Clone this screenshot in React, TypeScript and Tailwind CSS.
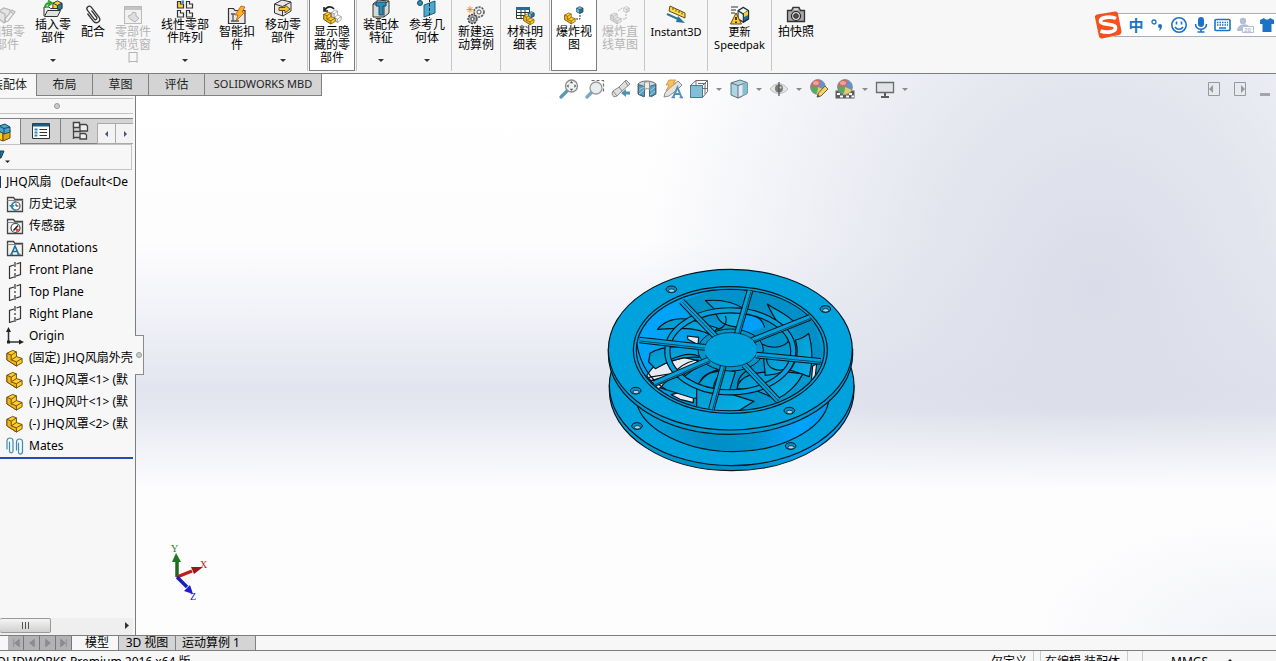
import React from 'react';
import clsx from 'clsx';

type IconProps = { className?: string };
type IconType = (p: IconProps) => React.ReactElement;

function Svg({ size = 20, box = 20, className, children }: { size?: number; box?: number; className?: string; children: React.ReactNode }) {
  return (
    <svg width={size} height={size} viewBox={`0 0 ${box} ${box}`} fill="none" className={clsx('shrink-0', className)} aria-hidden="true">
      {children}
    </svg>
  );
}

/* ---------- shared glyphs ---------- */

function PartShape({ fill = '#ffcf26', side = '#f0b51c', line = '#6b4a10' }) {
  return (
    <g stroke={line} strokeLinejoin="round">
      <path d="M1 4.500 7 1.500l4 1.500v5l6 2v4.500L11 18 1 11.500z" fill={fill} />
      <path d="M1 4.500 5.500 6.500v5L11 13.500V18L1 11.500z" fill={side} />
      <path d="M5.500 6.500 11 3M5.500 11.500 11 8M11 13.500l6-3.500" />
    </g>
  );
}

function CubeShape({ fill = '#6cc3e6', side = '#1f7fa8', line = '#1c2f3a' }) {
  return (
    <g stroke={line} strokeLinejoin="round">
      <path d="M1 3.500 6 1l5 2.500v6L6 12 1 9.500z" fill={fill} />
      <path d="M6 6l5-2.500v6L6 12z" fill={side} />
      <path d="M1 3.500 6 6" />
    </g>
  );
}

/* ---------- ribbon icons ---------- */

const EditPartIcon: IconType = () => (
  <Svg>
    <g stroke="#b5b5b5" strokeWidth="1.200">
      <path d="M2 6l5-3 6 2v8l-6 5-5-4z" fill="#e4e4e4" />
      <path d="M8 14l7-9 3 2-7 9-3 1z" fill="#f1f1f1" />
      <path d="M2 6l6 3v8M14 7l3 2" />
    </g>
  </Svg>
);
const InsertIcon: IconType = () => (
  <Svg>
    <g transform="translate(9 2) scale(.9)"><CubeShape fill="#ffcf26" side="#1f7fa8" /></g>
    <path d="M1 18V9h5l1.500 1.500H15V13" fill="#eee" stroke="#333" />
    <path d="M1.500 18.500 4.500 12.500h13l-3 6z" fill="#e2e2e2" stroke="#333" />
    <path d="M2 10C2 6 4 5 7 5M5 2.500l4 2.500-4 3" stroke="#27a02b" strokeWidth="1.800" />
  </Svg>
);
const ClipIcon: IconType = () => (
  <Svg>
    <g transform="rotate(-38 10 10)" stroke="#333" strokeWidth="1.300" strokeLinecap="round">
      <path d="M6.500 6v9c0 5 7 5 7 0V3c0-3.500-5-3.500-5 0v11c0 2 3 2 3 0V6" />
    </g>
  </Svg>
);
const PreviewIcon: IconType = () => (
  <Svg>
    <rect x="1.500" y="1.500" width="17" height="17" fill="#f1f1f1" stroke="#b9b9b9" />
    <path d="M2 3.500h16" stroke="#c4c4c4" strokeWidth="3" />
    <path d="M5 11l3-1 2-3 3 1v3l3 2-4 4-5-3z" fill="#dedede" stroke="#b5b5b5" />
  </Svg>
);
const PatternIcon: IconType = () => (
  <Svg>
    {[[2, 3], [11, 3], [2, 12], [11, 12]].map(([x, y], i) => (
      <path key={i} transform={`translate(${x} ${y})`} d="M.5.5h3v2.500h3v4h-6z" fill={i === 0 ? '#ffd23a' : '#f4f4f4'} stroke="#333" strokeWidth="1.200" />
    ))}
    <path d="M6.500 2.500h2.500v2.500H6.500z" fill="#2d8db5" />
  </Svg>
);
const FastenerIcon: IconType = () => (
  <Svg>
    <path d="M1.500 18.500v-15h5l1.500 2h10v13z" fill="#e8e8e8" stroke="#333" strokeWidth="1.200" />
    <path d="M4 9h4M6 9v7M4 16h8" stroke="#555" strokeWidth="1.300" />
    <path d="M14 1l4 1-3 5h3l-9 9 2-6H8z" fill="#ffb020" stroke="#b8551a" strokeWidth=".8" />
  </Svg>
);
const MoveIcon: IconType = () => (
  <Svg>
    <path d="M1.500 6 9 2l9 2v9l-8 5-8.500-3z" fill="#e6e6e6" stroke="#333" />
    <path d="M1.500 6l8 2.500V18M9.500 8.500 18 4" stroke="#333" />
    <path d="M6 9.500h6V7l5 4-5 4v-2.500H6z" fill="#f2c53a" stroke="#6b4a10" />
  </Svg>
);
const ShowHideIcon: IconType = () => (
  <Svg>
    <g transform="translate(9 4) scale(.6 .75)"><PartShape fill="#fff" side="#ddd" line="#888" /></g>
    <g transform="translate(1 6) scale(.72)"><PartShape /></g>
    <path d="M3 5c2-4 7-4 9-1M2 2v4h4" stroke="#222" strokeWidth="1.600" />
  </Svg>
);
const AsmFeatureIcon: IconType = () => (
  <Svg>
    <path d="M2 6l5-4 11 1v12l-5 4H2z" fill="#d5d9db" stroke="#333" />
    <path d="M2 6h11v13M13 6l5-3" stroke="#333" />
    <path d="M5 4h10v4h-3v9H8V8H5z" fill="#2d8db5" stroke="#124a63" />
  </Svg>
);
const RefGeomIcon: IconType = () => (
  <Svg>
    <circle cx="3" cy="5" r="2.500" fill="#2d8db5" stroke="#124a63" />
    <path d="M7 7l11-4v12L7 19z" fill="#4aa9d0" stroke="#1b5e7d" />
    <path d="M12.500 1v19" stroke="#222" strokeDasharray="3 1.500" />
  </Svg>
);
const MotionIcon: IconType = () => (
  <Svg>
    <circle cx="13" cy="7" r="5" fill="#e8e8e8" stroke="#555" strokeWidth="1.500" strokeDasharray="2.200 1" />
    <circle cx="13" cy="7" r="2" fill="#fff" stroke="#555" />
    <circle cx="6.500" cy="14" r="4.500" fill="#a9a9a9" stroke="#444" strokeWidth="1.300" strokeDasharray="2.200 1" />
    <circle cx="6.500" cy="14" r="1.600" fill="#fff" stroke="#444" />
    <path d="M4 1v7M.5 4.500h7M1.500 2l5 5M6.500 2l-5 5" stroke="#e8821c" strokeWidth=".8" />
  </Svg>
);
const BomIcon: IconType = () => (
  <Svg>
    <path d="M1.500 2.500h13v11h-13z" fill="#fff" stroke="#333" />
    <path d="M1 3.500h14" stroke="#1f6f94" strokeWidth="3" />
    <path d="M1.500 7.500h13M1.500 10.500h13M6 5v9M10 5v9" stroke="#333" />
    <g transform="translate(8 8) scale(.65)"><PartShape /></g>
    <g transform="translate(13 6) scale(.55)"><CubeShape /></g>
  </Svg>
);
const ExplodeIcon: IconType = () => (
  <Svg>
    <g transform="translate(0 7) scale(.66)"><PartShape /></g>
    <g transform="translate(12 1) scale(.62)"><CubeShape /></g>
    <path d="M16 10v4h-5" stroke="#333" strokeDasharray="2 1" />
  </Svg>
);
const ExplodeLineIcon: IconType = () => (
  <Svg>
    <g transform="translate(0 7) scale(.66)"><PartShape fill="#e6e6e6" side="#d6d6d6" line="#b4b4b4" /></g>
    <g transform="translate(13 1) scale(.55)"><CubeShape fill="#eee" side="#ddd" line="#b4b4b4" /></g>
    <path d="M16 9v5h-4M12 3 8 6" stroke="#b4b4b4" strokeDasharray="2 1" />
  </Svg>
);
const Instant3DIcon: IconType = () => (
  <Svg>
    <path d="M4 1l15 7v5L3 6z" fill="#ffd94a" stroke="#5d4a12" />
    <path d="M7 3v2M10 4.500v2M13 6v2M16 7.500v2" stroke="#5d4a12" />
    <path d="M1 9l11 5" stroke="#2a7698" strokeWidth="2" />
    <path d="M12 11l7 7-9-1z" fill="#2a7698" />
  </Svg>
);
const SpeedpakIcon: IconType = () => (
  <Svg>
    <path d="M1 2h7M1 5h5M1 8h4" stroke="#333" />
    <g transform="translate(7 1) scale(1.050 1.350)"><CubeShape fill="#eef3f5" side="#1f6f94" /></g>
    <path d="M14 8l4-2v4l-4 2z" fill="#ffcf26" />
    <path d="M6 8l5.500 11H.5z" fill="#ffc91e" stroke="#6b4a10" strokeLinejoin="round" />
    <path d="M6 12v3M6 16.500v1.500" stroke="#111" strokeWidth="1.600" />
  </Svg>
);
const CameraIcon: IconType = () => (
  <Svg>
    <path d="M1.500 5.500h4l1.500-3h6l1.500 3h4v11h-17z" fill="#a8a8a8" stroke="#333" strokeWidth="1.300" />
    <path d="M8 4h4" stroke="#fff" />
    <circle cx="10" cy="11" r="4.500" fill="#d8d8d8" stroke="#222" strokeWidth="1.200" />
    <circle cx="10" cy="11" r="2.300" fill="#555" stroke="#222" />
  </Svg>
);

/* ---------- heads-up toolbar icons ---------- */

const ZoomFitIcon: IconType = () => (
  <Svg>
    <path d="M2 18l6-6" stroke="#3d87ad" strokeWidth="3.200" strokeLinecap="round" />
    <circle cx="12.500" cy="7" r="6" fill="#eef1f2" stroke="#777" strokeWidth="1.300" />
    <path d="M12.500 2l1.800 2.200h-3.600zM12.500 12l1.800-2.200h-3.600zM7.500 7l2.200-1.800v3.600zM17.500 7l-2.200-1.800v3.600z" fill="#444" />
  </Svg>
);
const ZoomAreaIcon: IconType = () => (
  <Svg>
    <path d="M6.500 1.500h12v12" stroke="#555" strokeWidth="1.200" strokeDasharray="3 2" />
    <path d="M2 18l5-5" stroke="#5b9dbf" strokeWidth="3.200" strokeLinecap="round" />
    <circle cx="11" cy="9" r="6" fill="#e4ebee" stroke="#8a8a8a" strokeWidth="1.300" />
  </Svg>
);
const PrevViewIcon: IconType = () => (
  <Svg>
    <path d="M15 1l4 4-8 7-5 5-3 1-2-3 1-3 6-4z" fill="#d9d9d9" stroke="#777" />
    <path d="M14 2l3 5M8 8l3 4M2 12l4 5" stroke="#777" />
    <path d="M19 12.500h-4V10l-5 4 5 4v-2.500h4z" fill="#2f7fa6" />
  </Svg>
);
const SectionIcon: IconType = () => (
  <Svg>
    <path d="M1 5c3-4 14-4 18 0v10l-5 3V9H7v9l-6-3z" fill="#c9cfd2" stroke="#555" />
    <path d="M1.500 5.500 7.500 7.500v10l-6-2zM12.500 7.500l6-2v9.500l-6 2.500z" fill="#3b8fb8" stroke="#1e516c" />
    <path d="M2 11l5-3M2 15l5-4M13 12l5-4M13 16l5-4" stroke="#a9d2e5" strokeWidth=".8" />
    <path d="M7.500 3.500c2-1 4-1 5 0v7c-1-1-3-1-5 0z" fill="#e6e9ea" stroke="#777" />
  </Svg>
);
const DynamicIcon: IconType = () => (
  <Svg>
    <path d="M15 2l4 4-5 5-8 6-5 1 1-4 5-6z" fill="#ddd" stroke="#777" />
    <path d="M6 1h7l-3 3h3L3 12l3-6H3z" fill="#f5b545" stroke="#c57a1e" strokeWidth=".8" />
    <path d="M10 18.500l4.500-10 4 10M12 15h5" stroke="#2f7fa6" strokeWidth="1.900" />
    <path d="M8.500 18.500h3.500M16.500 18.500H20" stroke="#2f7fa6" strokeWidth="1.300" />
  </Svg>
);
const OrientIcon: IconType = () => (
  <Svg>
    <path d="M1.500 6.500 7 1.500h11.500v11l-5 6h-12z" fill="#fff" stroke="#555" />
    <path d="M7 1.500v5M13.500 6.500l5-5M9 4.500h8M16 4v11M13.500 9.500h5" stroke="#555" />
    <path d="M1.500 6.500h12v12h-12z" fill="#6fb4d2" stroke="#2a6582" />
  </Svg>
);
const DisplayIcon: IconType = () => (
  <Svg>
    <path d="M2 4l9-3 7 2.500v11L9 19l-7-3z" fill="#9fd0e4" stroke="#4b5b63" />
    <path d="M9 6.500l9-3v11L9 19z" fill="#e5e9eb" stroke="#4b5b63" />
    <path d="M13.500 5l4.500-1.500v11L13.500 17z" fill="#6fb4d2" />
    <path d="M2 4l7 2.500" stroke="#4b5b63" />
  </Svg>
);
const EyeIcon: IconType = () => (
  <Svg>
    <path d="M1 10c5-7 13-7 18 0-5 6-13 6-18 0z" fill="#e2e2e2" stroke="#b5b5b5" />
    <circle cx="10" cy="9.500" r="4" fill="#666" />
    <path d="M10 3v14" stroke="#333" strokeWidth="1.200" />
    <circle cx="11.500" cy="8.500" r="1" fill="#ddd" />
  </Svg>
);
function BallShape() {
  return (
    <g>
      <circle cx="9" cy="8" r="7.500" fill="#4a83c9" />
      <path d="M9 8 3 3.500A7.500 7.500 0 0 1 9 .5c3 0 3 5 0 7.500z" fill="#d94b45" />
      <path d="M9 8C6 6 2 7 1.500 8a7.500 7.500 0 0 0 5 7C9 13 9 10 9 8z" fill="#39a04a" />
      <path d="M9 8c0 3-1 6-2 7.200A7.500 7.500 0 0 0 16 11z" fill="#e5c648" />
      <path d="M3 3.500C1.500 5 1.500 7 1.500 8 4 6.500 6 6.500 9 8z" fill="#d94b45" />
      <circle cx="9" cy="8" r="7.500" stroke="#777" strokeWidth=".7" />
      <ellipse cx="7" cy="4" rx="3" ry="2" fill="#fff" opacity=".4" />
    </g>
  );
}
const AppearanceIcon: IconType = () => (
  <Svg>
    <BallShape />
    <path d="M8 18l1.500-4L16 7l3 3-7 7z" fill="#f6cf4e" stroke="#5a4a2c" />
    <path d="M8 18.500l1-3 2 2z" fill="#333" />
  </Svg>
);
const SceneIcon: IconType = () => (
  <Svg>
    <path d="M.5 11.500h19v8H.5z" fill="#444" />
    <path d="M2 14h3v2H2zM8 14h3v2H8zM14 14h3v2h-3zM5 16.500h3v2H5zM11 16.500h3v2h-3zM16.500 16.500H19v2h-2.500z" fill="#fff" />
    <g transform="translate(1 0)"><BallShape /></g>
  </Svg>
);
const MonitorIcon: IconType = () => (
  <Svg>
    <path d="M1.500 3.500h17v10h-17z" fill="#dfe3e4" stroke="#555" strokeWidth="1.300" />
    <path d="M10 14v4M6 18h8" stroke="#444" strokeWidth="2" />
  </Svg>
);

/* ---------- tree icons ---------- */

function Folder({ children }: { children: React.ReactNode }) {
  return (
    <Svg size={18} box={18}>
      <path d="M1.500 16.500v-14h6l1.500 2h7.500v12z" fill="#f2f2f2" stroke="#444" strokeWidth="1.300" />
      <path d="M1.500 5.500h15" stroke="#888" />
      {children}
    </Svg>
  );
}
const HistoryIcon: IconType = () => (
  <Folder>
    <circle cx="10" cy="11" r="4" fill="#fff" stroke="#555" strokeWidth="1.200" />
    <path d="M10 8.500V11h2.500" stroke="#333" />
    <path d="M3 10l3 4 2.500-4z" fill="#2f8ab5" />
    <path d="M5.500 11C6 8 8 6.500 10 7M6 13c1 2 3 2.500 4 2.500" stroke="#2f8ab5" strokeWidth="1.300" />
  </Folder>
);
const SensorIcon: IconType = () => (
  <Folder>
    <circle cx="9.500" cy="11" r="4.500" fill="#fff" stroke="#444" strokeWidth="1.200" />
    <path d="M9.500 11l4 1.500a4 4 0 0 1-3.500 2.500z" fill="#e2442c" />
    <path d="M7.500 13.500l4.500-5" stroke="#222" strokeWidth="1.500" />
  </Folder>
);
const AnnotIcon: IconType = () => (
  <Folder>
    <path d="M5.500 15 9 7l3.500 8M7 12.500h4.500" stroke="#1e6f93" strokeWidth="1.600" />
    <path d="M4 15.200h3M11 15.200h3.500" stroke="#1e6f93" />
  </Folder>
);
const PlaneIcon: IconType = () => (
  <Svg size={18} box={18}>
    <path d="M8 4 3.500 5.500v12L8 16M10.500 3l4-1.500v12L10 15" stroke="#333" strokeWidth="1.200" />
    <path d="M9 1v5M9 8v2M9 12v5" stroke="#333" strokeWidth="1.200" />
  </Svg>
);
const OriginIcon: IconType = () => (
  <Svg size={18} box={18}>
    <path d="M2.500 4v11H14" stroke="#333" strokeWidth="1.500" />
    <path d="M2.500 0 5 5H0zM18 15l-5-2.500v5z" fill="#222" />
    <path d="M1 13.500h3v3H1z" fill="#222" />
  </Svg>
);
const PartIcon: IconType = () => (
  <Svg size={18} box={19}>
    <PartShape />
  </Svg>
);
const MatesIcon: IconType = () => (
  <Svg size={18} box={18}>
    <g stroke="#3d8db3" strokeWidth="1.200" strokeLinecap="round">
      <path d="M1 12V4c0-4 6-4 6 0v10c0 2.500-3.500 2.500-3.500 0V5" />
      <path d="M10.500 13V5c0-4 6-4 6 0v9c0 4-4 4-4 1V6" />
    </g>
  </Svg>
);

/* ---------- ribbon ---------- */

type Tool = { label: string; icon: IconType; width?: string; menu?: boolean; off?: boolean; on?: boolean; sep?: boolean; small?: boolean };

const tools: Tool[] = [
  { label: '编辑零\n部件', icon: EditPartIcon, off: true },
  { label: '插入零\n部件', icon: InsertIcon, menu: true },
  { label: '配合', icon: ClipIcon, width: 'w-[34px]' },
  { label: '零部件\n预览窗\n口', icon: PreviewIcon, off: true },
  { label: '线性零部\n件阵列', icon: PatternIcon, width: 'w-[58px]', menu: true },
  { label: '智能扣\n件', icon: FastenerIcon },
  { label: '移动零\n部件', icon: MoveIcon, menu: true, sep: true },
  { label: '显示隐\n藏的零\n部件', icon: ShowHideIcon, on: true, sep: true },
  { label: '装配体\n特征', icon: AsmFeatureIcon, menu: true },
  { label: '参考几\n何体', icon: RefGeomIcon, menu: true, sep: true },
  { label: '新建运\n动算例', icon: MotionIcon, sep: true },
  { label: '材料明\n细表', icon: BomIcon, sep: true },
  { label: '爆炸视\n图', icon: ExplodeIcon, on: true },
  { label: '爆炸直\n线草图', icon: ExplodeLineIcon, off: true, sep: true },
  { label: 'Instant3D', icon: Instant3DIcon, width: 'w-[60px]', sep: true, small: true },
  { label: '更新\nSpeedpak', icon: SpeedpakIcon, width: 'w-[61px]', sep: true, small: true },
  { label: '拍快照', icon: CameraIcon },
];

function Caret({ className = 'text-[#333]' }: { className?: string }) {
  return (
    <svg width="6" height="3" viewBox="0 0 6 3" className={className} aria-hidden="true">
      <path d="M0 0h6L3 3z" fill="currentColor" />
    </svg>
  );
}

function ToolButton({ tool }: { tool: Tool }) {
  const Icon = tool.icon;
  return (
    <>
      <button
        disabled={tool.off}
        className={clsx(
          'flex shrink-0 flex-col items-center border-x',
          tool.width ?? 'w-[46px]',
          tool.on ? 'mb-0.5 border-b border-[#7d7d7d] bg-white' : 'border-transparent',
          tool.off ? 'text-[#b4b4b4]' : 'text-black',
        )}
      >
        <span className={clsx('flex w-full shrink-0 items-end justify-center overflow-hidden', tool.menu ? 'h-[18px]' : 'h-[25px]')}>
          <Icon />
        </span>
        <span className={clsx('text-center leading-[13px] whitespace-pre', tool.small && 'text-[11px]')}>{tool.label}</span>
        {tool.menu && <Caret className="mt-auto mb-[11px] text-[#333]" />}
      </button>
      {tool.sep && <span className="mx-px mb-0.5 w-px shrink-0 bg-[#c6c6c6]" />}
    </>
  );
}

function ImeBar() {
  return (
    <div className="mt-[11px] ml-auto flex h-7 shrink-0 items-center">
      <svg width="28" height="28" viewBox="0 0 28 28" className="z-10" role="img" aria-label="Sogou">
        <path d="M1 6.500C.5 5 1.500 4 3 3.500L21 .5c1.500 0 2.500.5 3 2l3.500 18c0 2-1 3-2.500 3.500L8 27.500c-1.500 0-2.500-.5-3-2z" fill="#f4511e" />
        <path d="M22 7.500C17 5 6 6 6.500 10.500 7 14.500 21 12 21.500 16.500 22 21.500 12 22 6.500 20" stroke="#fff" strokeWidth="3.600" fill="none" />
      </svg>
      <div className="-ml-2 flex h-6 items-center gap-1.5 border-y border-[#a9adbd] bg-white pr-0.5 pl-3.5 text-[#1a73c9]">
        <button className="w-4 text-[15px] leading-none font-bold">中</button>
        <svg width="14" height="16" viewBox="0 0 14 16" aria-hidden="true">
          <circle cx="4" cy="5" r="2" fill="none" stroke="currentColor" strokeWidth="1.300" />
          <path d="M8 9a2 2 0 1 1 4 0c0 2-1 4-3 5 .5-1 .8-2 .8-3A2 2 0 0 1 8 9z" fill="currentColor" />
        </svg>
        <svg width="18" height="18" viewBox="0 0 18 18" fill="none" stroke="currentColor" strokeWidth="1.600" aria-hidden="true">
          <circle cx="9" cy="9" r="7.200" />
          <path d="M6.500 5.500v3M11.500 5.500v3M5 11c2 3 6 3 8 0" />
        </svg>
        <svg width="14" height="18" viewBox="0 0 14 18" aria-hidden="true">
          <rect x="4" y="1" width="6" height="10" rx="3" fill="currentColor" />
          <path d="M1.500 8c0 7 11 7 11 0M7 13v3M3.500 16h7" stroke="currentColor" strokeWidth="1.600" fill="none" />
        </svg>
        <svg width="17" height="16" viewBox="0 0 17 16" aria-hidden="true">
          <rect x="1" y="2.500" width="15" height="11" rx="1" fill="none" stroke="currentColor" strokeWidth="1.600" />
          <path d="M3 5.500h11M3 8h11" stroke="currentColor" strokeWidth="1.500" strokeDasharray="1.500 1" />
          <path d="M5 11h7" stroke="currentColor" strokeWidth="1.500" />
        </svg>
        <svg width="17" height="18" viewBox="0 0 17 18" aria-hidden="true" className="text-[#b3bed3]">
          <circle cx="6" cy="5" r="3.200" fill="currentColor" />
          <path d="M0 15c0-8 12-8 12-4H5v4z" fill="currentColor" />
          <path d="M5.500 10.500h11v6h-11z" stroke="currentColor" fill="#fff" />
          <text x="7" y="16" fill="currentColor" className="text-[6px] font-bold">20</text>
        </svg>
        <svg width="14" height="16" viewBox="0 0 14 16" aria-hidden="true">
          <path d="M4 1c1.500 2 4.500 2 6 0l4 2v4h-2.500v8h-9V7H0V3z" fill="currentColor" />
        </svg>
      </div>
    </div>
  );
}

/* ---------- model ---------- */

// spoke ends: hub side, rim side
const spokes = [
  [412, 222, 450, 92],
  [455, 242, 630, 172],
  [468, 285, 662, 304],
  [432, 314, 533, 420],
  [370, 318, 334, 448],
  [326, 300, 162, 371],
  [316, 262, 118, 240],
  [347, 230, 245, 124],
];

const holes = [
  [214, 88],
  [676, 147],
  [107, 392],
  [568, 452],
  [111, 498],
  [572, 558],
];

const blades = [
  'M316 122c40-4 80 2 112 22l12-2-24 60c-30-6-60-2-72-54z',
  'M172 208c24-28 62-38 104-28l76 24c-10 10-12 20-4 30-50-36-110-30-176-26z',
  'M502 132c28 20 60 30 86 60l-44 20c-12-30-30-50-42-80z',
  'M586 240c20-4 30-10 40-20 10 34 14 80 2 130l-58-20c24-30 26-60 16-90z',
  'M150 280c50-30 110-20 168-10l-22 22c-50-4-90 10-130 34l-20-20z',
  'M182 384c20-34 70-50 108-6 20 24 4 40-12 36z',
  'M290 380c30-50 70-60 116-44l-20 64 76 24-42 26c-50 10-90 4-130-10z',
  'M412 386c4-50 90-60 196-44-14 30-44 60-78 76l-60-26z',
  'M490 290c40 0 70 10 84 16-10 30-40 36-78 40z',
];

function FanModel() {
  return (
    <svg width="265" height="220" viewBox="0 0 795 660" fill="none" className="absolute top-[164px] left-[464px]" role="img" aria-label="JHQ风扇">
      <defs>
        <linearGradient id="barrel">
          <stop offset="0" stopColor="#00a2dd" />
          <stop offset=".35" stopColor="#008fc6" />
          <stop offset=".6" stopColor="#0092cc" />
          <stop offset=".85" stopColor="#00a4ff" />
          <stop offset="1" stopColor="#0098e6" />
        </linearGradient>
        <linearGradient id="well" x1="0" y1=".3" x2="1" y2=".6">
          <stop offset="0" stopColor="#00a6ff" />
          <stop offset=".25" stopColor="#00a0ee" />
          <stop offset=".5" stopColor="#008dc4" />
          <stop offset="1" stopColor="#009bd2" />
        </linearGradient>
        <linearGradient id="blade" x1="0" y1="0" x2="1" y2="1">
          <stop offset="0" stopColor="#0096cc" />
          <stop offset="1" stopColor="#08b0e6" />
        </linearGradient>
        <clipPath id="opening"><ellipse cx="391" cy="270" rx="281" ry="181" /></clipPath>
      </defs>

      <g stroke="#02141c" strokeWidth="3.500">
        <path d="M28 376v15c0 133 164 241 367 241s367-108 367-241v-15z" fill="url(#barrel)" />
        <ellipse cx="395" cy="376" rx="367" ry="241" fill="#00a2dd" />
        <path d="M110 430c20 80 150 145 290 145s270-65 286-150l-60-60H170z" fill="url(#barrel)" />
        <path d="M25 268v14c0 132 164 241 366 241s367-109 367-241v-14z" fill="#009ad4" />
        <ellipse cx="391" cy="269" rx="366" ry="241" fill="#00a2dd" />
        <ellipse cx="391" cy="270" rx="291" ry="190" />
        <ellipse cx="391" cy="270" rx="282" ry="182" fill="url(#well)" />
      </g>

      <g clipPath="url(#opening)" stroke="#02141c" strokeWidth="3.500" strokeLinejoin="round">
        <path d="M250 124c60-30 120-40 190-30l-10 74-150 30z" fill="#0092c8" stroke="none" />
        <path d="M450 92c80 10 150 40 190 90l30 110-40 0-40-80-140-60z" fill="#008fc6" stroke="none" />
        <path d="M140 348c14-24 26-36 50-36l60-20 44 10-50 50-70 34z" fill="#e9ebf4" />
        <path d="M214 404c20-6 44-10 66-20v44l-40-10z" fill="#e9ebf4" />
        <path d="M262 228l34 4-2 22-30-16z" fill="#e9ebf4" />
        <path d="M638 318l12-6-4 34-12 16z" fill="#e9ebf4" />
        {blades.map((d) => (
          <path key={d} d={d} fill="url(#blade)" />
        ))}
        <path d="M436 166c30 0 50 14 56 34l-50 20-22-12z" fill="#00a0fa" stroke="none" />
        <path d="M376 168c8 20-4 36-24 40M460 168c20 4 30 20 34 34M570 225c0 36-50 48-90 24M500 290c-4 40 40 50 70 30M210 300c40-20 70-20 90-10M230 330c20-20 50-30 66-30M250 352c24-20 40-30 64-40M300 366c10-24 30-30 60-32M340 386c0-20 10-30 20-44M412 386c0-30 10-40 30-56M200 350l-56 14M206 342l-60 10M110 250c10 60 40 110 90 140" />
      </g>

      <g>
        <ellipse cx="391" cy="274" rx="189" ry="123" stroke="#02141c" strokeWidth="19" />
        <ellipse cx="391" cy="274" rx="189" ry="123" stroke="#00a2dd" strokeWidth="12" />
        <ellipse cx="392" cy="270" rx="98" ry="63" fill="#0095cb" stroke="#02141c" strokeWidth="3" />
        {spokes.map(([x1, y1, x2, y2]) => (
          <g key={`${x1}-${y1}`}>
            <path d={`M${x1} ${y1}L${x2} ${y2}`} stroke="#02141c" strokeWidth="20" />
            <path d={`M${x1} ${y1}L${x2} ${y2}`} stroke="#00a2dd" strokeWidth="14" />
            <path d={`M${x1 + 3} ${y1 + 3}L${x2 + 3} ${y2 + 3}`} stroke="#02141c" strokeWidth="2" />
          </g>
        ))}
        <ellipse cx="392" cy="269" rx="78" ry="50" fill="#00a2dd" />
        <path d="M316 256c10-30 50-38 76-38s66 8 78 38M316 284c14 28 50 36 76 36s62-8 76-36" stroke="#02141c" strokeWidth="2" />
      </g>

      {holes.map(([x, y]) => (
        <g key={`${x}-${y}`} stroke="#02141c" strokeWidth="3">
          <ellipse cx={x} cy={y} rx="16" ry="10" fill="#008fc6" />
          <ellipse cx={x + 1} cy={y + 4} rx="9" ry="5" fill="#a8d8ec" strokeWidth="2" />
        </g>
      ))}
    </svg>
  );
}

function Triad() {
  return (
    <svg width="44" height="60" viewBox="0 0 44 60" className="absolute bottom-[34px] left-8 font-['Liberation_Serif',serif] text-[10px]" aria-hidden="true">
      <path d="M9 36V19" stroke="#1c6a1c" strokeWidth="3.500" />
      <path d="M8 12l5 9H4z" fill="#1c7a1c" />
      <path d="M9 36l15-6" stroke="#c41a1a" strokeWidth="3.500" />
      <path d="M35 26l-9 7-3-7z" fill="#9b1616" />
      <path d="M9 36l10 10" stroke="#1c1cb8" strokeWidth="3.500" />
      <path d="M25 53l-9-3 6-6z" fill="#1c1cd0" />
      <text x="3" y="11" fill="#138013">Y</text>
      <text x="32" y="27" fill="#e01010">X</text>
      <text x="22" y="59" fill="#1010e0">Z</text>
    </svg>
  );
}

/* ---------- command tabs + view toolbar ---------- */

const commandTabs = ['布局', '草图', '评估'];

const viewTools: { name: string; icon: IconType; menu?: boolean }[] = [
  { name: '整屏显示全图', icon: ZoomFitIcon },
  { name: '局部放大', icon: ZoomAreaIcon },
  { name: '上一视图', icon: PrevViewIcon },
  { name: '剖面视图', icon: SectionIcon },
  { name: '动态注解视图', icon: DynamicIcon },
  { name: '视图定向', icon: OrientIcon, menu: true },
  { name: '显示样式', icon: DisplayIcon, menu: true },
  { name: '隐藏/显示项目', icon: EyeIcon, menu: true },
  { name: '编辑外观', icon: AppearanceIcon },
  { name: '应用布景', icon: SceneIcon, menu: true },
  { name: '视图设置', icon: MonitorIcon, menu: true },
];

function CommandRow() {
  return (
    <div className="flex h-[22px] shrink-0 items-start">
      <nav className="flex h-[22px] shrink-0 text-[#222]">
        <button className="flex w-9 items-center justify-end overflow-hidden bg-[#f7f7f7] pr-[9px] whitespace-nowrap">装配体</button>
        {commandTabs.map((t) => (
          <button key={t} className="w-14 border-b border-l border-[#808080] bg-[#d4d4d4]">{t}</button>
        ))}
        <button className="w-[118px] border border-t-0 border-[#808080] bg-[#d4d4d4] text-[11px] whitespace-nowrap">SOLIDWORKS MBD</button>
      </nav>
      <div className="ml-[234px] flex shrink-0 pt-[5px]">
        {viewTools.map(({ name, icon: Icon, menu }) => (
          <div key={name} className="flex">
            <button aria-label={name} className="flex w-[26px] justify-center opacity-85"><Icon /></button>
            {menu && (
              <button aria-label={`${name} 选项`} className="flex w-[14px] items-center justify-center">
                <Caret className="text-[#8a8a8a]" />
              </button>
            )}
          </div>
        ))}
      </div>
      <div className="ml-auto flex shrink-0 gap-[13px] pt-2 pr-1.5 text-[#999]">
        <button aria-label="左窗格">
          <svg width="13" height="14" viewBox="0 0 13 14"><path d="M.5.5h11v13H.5z" fill="none" stroke="currentColor" /><path d="M5 3v8L1 7z" fill="currentColor" /></svg>
        </button>
        <button aria-label="右窗格">
          <svg width="13" height="14" viewBox="0 0 13 14"><path d="M.5.5h11v13H.5z" fill="none" stroke="currentColor" /><path d="M7 3v8l4-4z" fill="currentColor" /></svg>
        </button>
        <button aria-label="最小化" className="flex h-3.5 w-2.5 items-end"><span className="h-[3px] w-2.5 bg-[#a5a5a5]" /></button>
      </div>
    </div>
  );
}

/* ---------- feature tree ---------- */

const treeItems: { label: string; icon: IconType }[] = [
  { label: '历史记录', icon: HistoryIcon },
  { label: '传感器', icon: SensorIcon },
  { label: 'Annotations', icon: AnnotIcon },
  { label: 'Front Plane', icon: PlaneIcon },
  { label: 'Top Plane', icon: PlaneIcon },
  { label: 'Right Plane', icon: PlaneIcon },
  { label: 'Origin', icon: OriginIcon },
  { label: '(固定) JHQ风扇外壳', icon: PartIcon },
  { label: '(-) JHQ风罩<1> (默', icon: PartIcon },
  { label: '(-) JHQ风叶<1> (默', icon: PartIcon },
  { label: '(-) JHQ风罩<2> (默', icon: PartIcon },
  { label: 'Mates', icon: MatesIcon },
];

function FeatureTree() {
  return (
    <aside className="relative flex w-[136px] shrink-0 flex-col border-r border-[#7d7d7d] bg-[#f7f7f7] pr-0.5">
      <div className="mt-0.5 flex h-4 shrink-0 items-center border-y border-[#c2c2c2] pl-[54px]">
        <span className="size-1.5 rounded-full border border-[#999] bg-[#ccc]" />
      </div>
      <div className="mt-1 flex h-[26px] shrink-0 overflow-hidden border-t border-[#808080]">
        <button aria-label="特征树" className="flex w-5 items-center justify-end pr-2">
          <Svg size={20} box={20}>
            <path d="M4 8l7 3v8l-7-3z" fill="#ffcf26" stroke="#6b4a10" />
            <path d="M11 11l7-3v8l-7 3z" fill="#e3a512" stroke="#6b4a10" />
            <path d="M7 4l6-2 5 3v5l-6 2-5-3z" fill="#49a6cf" stroke="#1b4a60" />
            <path d="M7 4l5 2.500V12M12 6.500 18 5" stroke="#1b4a60" />
          </Svg>
        </button>
        <button aria-label="属性" className="flex w-10 shrink-0 items-center justify-center border-b border-l border-[#808080] bg-[#d4d4d4]">
          <Svg size={18} box={18}>
            <path d="M.5 1.500h17v15H.5z" fill="#fff" stroke="#333" />
            <path d="M1 3h16" stroke="#1b5e7d" strokeWidth="3" />
            <path d="M2.500 7.500h3M2.500 10.500h3M2.500 13.500h3" stroke="#2f8ab5" strokeWidth="2" />
            <path d="M7.500 7.500H15M7.500 10.500H15M7.500 13.500H15" stroke="#333" />
          </Svg>
        </button>
        <button aria-label="配置" className="flex w-[37px] shrink-0 items-center justify-center border-b border-l border-[#808080] bg-[#d4d4d4] pl-0.5">
          <Svg size={20} box={20}>
            <path d="M3.500 1v17M3.500 10.500H11M3.500 16.500H11" stroke="#444" strokeWidth="1.300" />
            <path d="M3.500 1.500h6v5h-6z" fill="#eee" stroke="#444" strokeWidth="1.300" />
            <path d="M10 3.500h6l1.500 1.500v5H10zM10 12.500h5l1.500 1.500v4H10z" fill="#eee" stroke="#444" strokeWidth="1.300" />
          </Svg>
        </button>
        <div className="flex shrink-0 border-t-4 border-[#d4d4d4] text-[#44508a]">
          <button aria-label="向左" className="flex w-[19px] items-center justify-center border border-[#aaa] bg-[#f3f3f3]">
            <svg width="3" height="6" viewBox="0 0 3 6"><path d="M3 0v6L0 3z" fill="currentColor" /></svg>
          </button>
          <button aria-label="向右" className="flex w-[19px] items-center justify-center border border-l-0 border-[#aaa] bg-[#f3f3f3]">
            <svg width="3" height="6" viewBox="0 0 3 6"><path d="M0 0v6l3-3z" fill="currentColor" /></svg>
          </button>
        </div>
      </div>
      <button aria-label="过滤器" className="mb-px flex h-[26px] w-[132px] shrink-0 items-center border border-l-0 border-[#c2c2c2]">
        <svg width="12" height="16" viewBox="0 0 12 16">
          <path d="M0 2h4L1 9H0z" fill="#2a7698" stroke="#163f52" />
          <path d="M5 11.500h5L7.500 14z" fill="#222" />
        </svg>
      </button>

      <div className="min-h-0 flex-1 overflow-hidden">
        <div className="flex h-[22px] items-center gap-[5px] whitespace-pre">
          <span className="h-3 w-px bg-[#1b3a52]" />
          <span>JHQ风扇   (Default&lt;De</span>
        </div>
        <ul className="border-b-2 border-[#1f4fb0]">
          {treeItems.map(({ label, icon: Icon }, i) => (
            <li key={i} className="flex h-[22px] items-center gap-[5px] pl-1.5 whitespace-nowrap">
              <Icon />
              <span>{label}</span>
            </li>
          ))}
        </ul>
      </div>

      <div className="flex h-[17px] shrink-0 items-center bg-[#efefef] pb-0.5">
        <div className="flex h-[15px] w-[51px] items-center justify-center gap-0.5 rounded-xs border border-l-0 border-[#999] bg-gradient-to-b from-[#f5f5f5] to-[#d0d0d0]">
          <span className="h-[7px] w-px bg-[#555]" />
          <span className="h-[7px] w-px bg-[#555]" />
          <span className="h-[7px] w-px bg-[#555]" />
        </div>
        <svg width="4" height="7" viewBox="0 0 4 7" className="mr-1 ml-auto" aria-hidden="true"><path d="M0 0v7l4-3.500z" fill="#333" /></svg>
      </div>

      <div className="absolute top-[239px] -right-[9px] z-10 flex h-10 w-[9px] items-center justify-center border border-l-0 border-[#8a8a8a] bg-[#f7f7f7]">
        <span className="size-1.5 rounded-full border border-[#999] bg-[#ccc]" />
      </div>
    </aside>
  );
}

/* ---------- bottom bars ---------- */

const navPaths = ['M5 3v8M11 3v8L6 7z', 'M10 3v8L5 7z', 'M5 3v8l5-4z', 'M10 3v8M4 3v8l5-4z'];

function SheetTabs() {
  return (
    <div className="flex h-4 shrink-0 border-y border-[#7d7d7d] bg-[#f7f7f7] pl-2">
      {navPaths.map((d) => (
        <button key={d} disabled className="flex w-4 items-center justify-center border-r border-[#777] bg-[#b2b2b5]">
          <svg width="14" height="14" viewBox="0 0 15 14"><path d={d} fill="#8c8c90" stroke="#8c8c90" /></svg>
        </button>
      ))}
      <button className="flex w-[46px] items-center justify-center pl-1 leading-none text-black">模型</button>
      <button className="flex w-[58px] items-center justify-center border-x border-[#808080] bg-[#d4d4d4] leading-none">3D 视图</button>
      <button className="flex w-20 items-center border-r border-[#808080] bg-[#d4d4d4] pl-1.5 leading-none">运动算例 1</button>
    </div>
  );
}

function StatusBar() {
  return (
    <footer className="flex h-2.5 shrink-0 items-start overflow-hidden bg-[#f7f7f7] leading-[22px] whitespace-nowrap">
      <span className="-ml-2.5">SOLIDWORKS Premium 2016 x64 版</span>
      <span className="ml-auto pr-1.5">欠定义</span>
      <span className="h-full w-2 border-x border-[#ccc]" />
      <span className="w-[86px] pl-1">在编辑 装配体</span>
      <span className="h-full w-4 border-x border-[#ccc]" />
      <span className="w-[84px] pl-7">MMGS</span>
      <span className="mt-2 mr-[43px] border-x-3 border-b-3 border-x-transparent border-b-[#222]" />
    </footer>
  );
}

export default function App() {
  return (
    <div className="flex h-screen flex-col overflow-hidden bg-[#f7f7f7] font-['Noto_Sans','Noto_Sans_CJK_SC',sans-serif] text-[12px] text-black">
      <header className="flex h-[74px] shrink-0 overflow-hidden border-b border-[#7d7d7d]">
        <div className="-ml-4 flex">
          {tools.map((t) => (
            <ToolButton key={t.label} tool={t} />
          ))}
        </div>
        <ImeBar />
      </header>

      <main className="flex min-h-0 flex-1 flex-col bg-[radial-gradient(ellipse_20%_22%_at_100%_100%,#f2f3f7,#f2f3f700),linear-gradient(to_bottom,#fdfdfe00_60%,#fdfdfe_74%),radial-gradient(ellipse_36%_100%_at_86%_38%,#dadce9_0%,#dcdfeacc_35%,#e6e9f100_100%),linear-gradient(to_bottom,#ffffff_0%,#fdfdfe_30%,#f0f1f7_44%,#e2e5ef_56%,#e6e8f1_62%)]">
        <CommandRow />
        <div className="flex min-h-0 flex-1">
          <FeatureTree />
          <section className="relative min-w-0 flex-1 overflow-hidden">
            <FanModel />
            <Triad />
          </section>
        </div>
      </main>

      <SheetTabs />
      <StatusBar />
    </div>
  );
}
